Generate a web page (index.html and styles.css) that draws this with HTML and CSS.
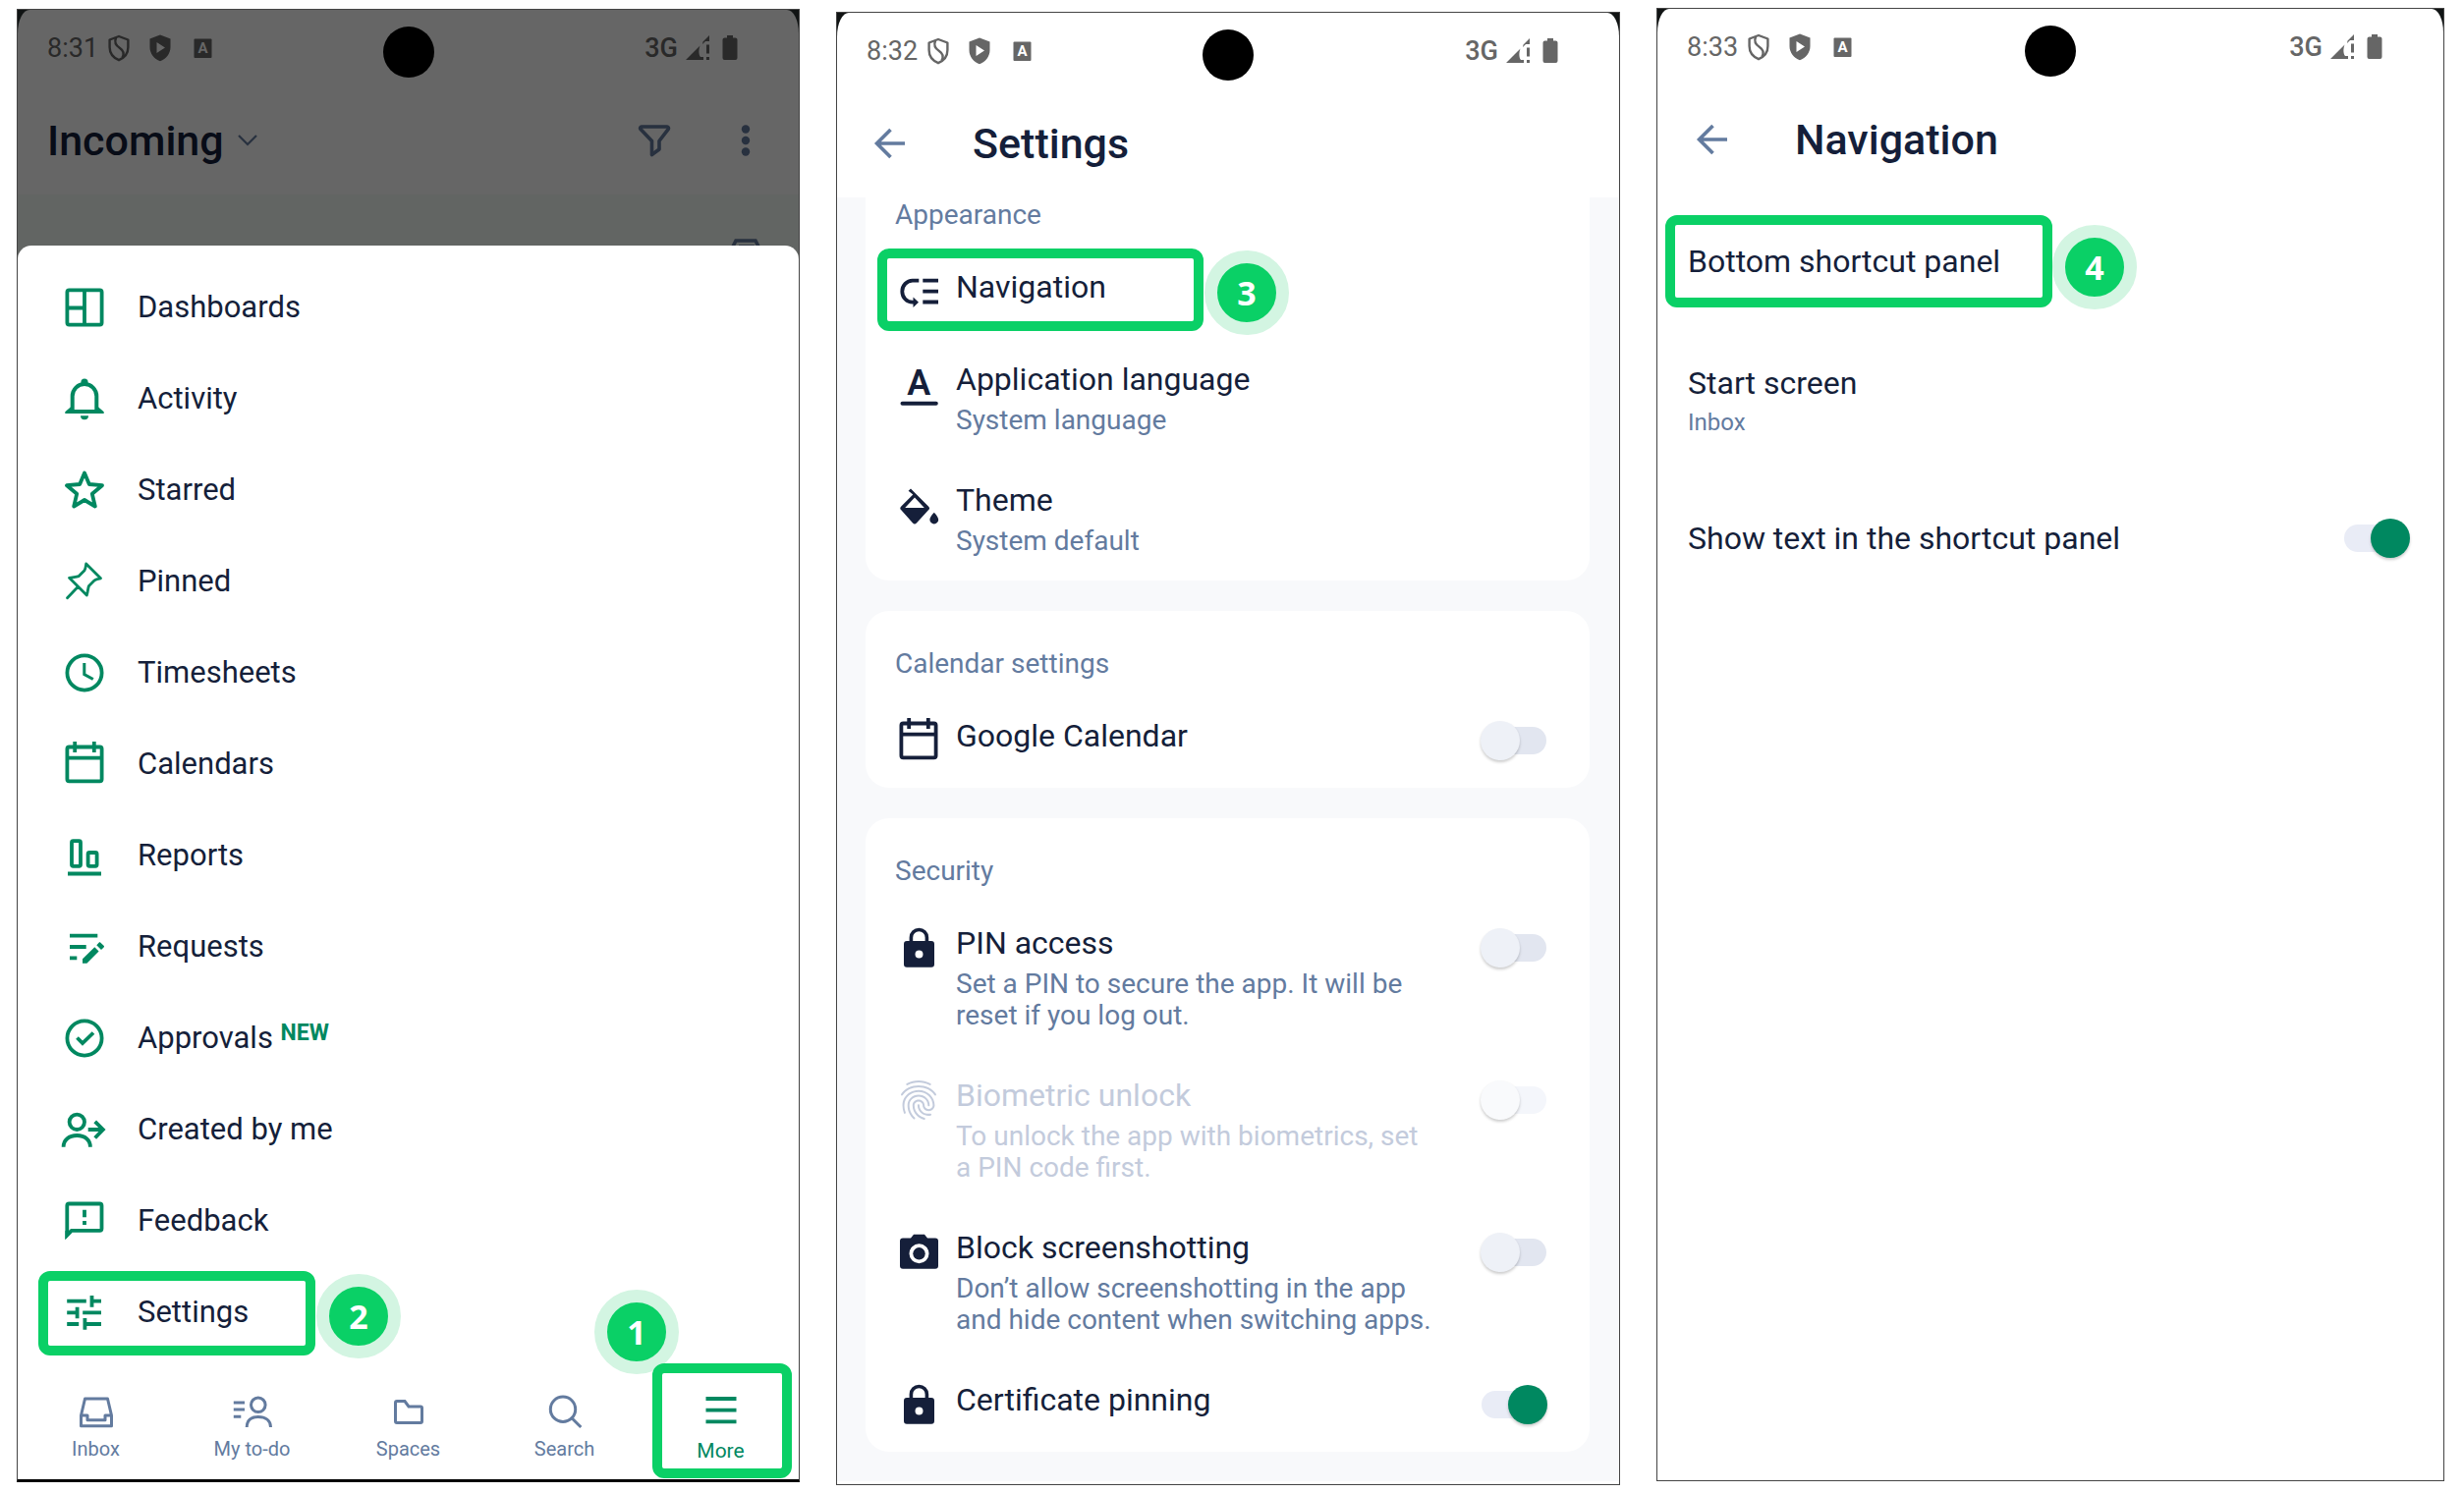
FILE: index.html
```html
<!DOCTYPE html>
<html lang="en">
<head>
<meta charset="utf-8">
<meta name="viewport" content="width=device-width, initial-scale=1">
<title>Bottom shortcut panel setup</title>
<link rel="stylesheet" href="styles.css">
</head>
<body>
<svg class="sprite" aria-hidden="true">
  <symbol id="i-shield-line" viewBox="0 0 22 28"><g fill="none" stroke="currentColor" stroke-width="2.4" stroke-linejoin="round"><path d="M11 2 20.400 5.500V13c0 6-3.800 10.800-9.400 13.200C5.400 23.800 1.600 19 1.600 13V5.500z"/><path d="M8 3.500c-2 5 0 8 4 10.500 4.500 3 4.500 6 2.500 9.500"/></g></symbol>
  <symbol id="i-shield-play" viewBox="0 0 22 28"><path fill="currentColor" fill-rule="evenodd" d="M11 .5 21.500 4.500V13c0 6.500-4.300 11.800-10.500 14.300C4.800 24.800.5 19.500.5 13V4.500zM7.500 8v11l8.500-5.500z"/></symbol>
  <symbol id="i-signal" viewBox="0 0 24 28"><path fill="currentColor" d="M0 26 14.500 11.500c-1.500 4-1.500 9 .5 11.500h3v3zM17.500 7.500 24 1v6h-4l-3 3zM21 10.500h3v9h-3zM21 23h3v3h-3z"/></symbol>
  <symbol id="i-battery" viewBox="0 0 16 28"><path fill="currentColor" d="M5 1h6v2.500h2.500a2 2 0 0 1 2 2V24a2 2 0 0 1-2 2h-11a2 2 0 0 1-2-2V5.500a2 2 0 0 1 2-2H5z"/></symbol>
  <symbol id="i-back" viewBox="0 0 48 48"><path fill="none" stroke="currentColor" stroke-width="3.600" d="M39 24H10.500M24.500 10 10.500 24l14 14"/></symbol>
  <symbol id="i-lock" viewBox="0 0 48 48"><path fill="none" stroke="currentColor" stroke-width="3.600" d="M16.400 19v-5.500a8 8 0 0 1 16 0V19"/><path fill="currentColor" fill-rule="evenodd" d="M12 17h25a3 3 0 0 1 3 3v20.700a3 3 0 0 1-3 3H12a3 3 0 0 1-3-3V20a3 3 0 0 1 3-3zm12.500 9.500a4 4 0 1 0 0 8 4 4 0 0 0 0-8z"/></symbol>
  <symbol id="i-calendar" viewBox="0 0 48 48"><g fill="none" stroke="currentColor" stroke-width="3.800"><rect x="6.400" y="6.500" width="35.200" height="34.800" rx="2"/><path d="M6 17.700h36M14.200 1v11M33.800 1v11"/></g></symbol>
</svg>
<main class="steps">

  <section class="screen screen-menu" aria-label="Incoming">
    <div class="face face-dimmed">
      <header class="top">
        <div class="status">
          <span class="time">8:31</span>
          <div class="status-icons">
            <svg class="s-22"><use href="#i-shield-line"/></svg>
            <svg class="s-22"><use href="#i-shield-play"/></svg>
            <svg class="s-22" viewBox="0 0 22 28"><rect x="3.500" y="4.500" width="18" height="19.500" rx="1" fill="currentColor"/><text class="cut" x="12.500" y="19" text-anchor="middle">A</text></svg>
          </div>
          <span class="net">3G</span>
          <svg class="s-24"><use href="#i-signal"/></svg>
          <svg class="s-16"><use href="#i-battery"/></svg>
        </div>
        <span class="punch"></span>
        <div class="bar bar-list">
          <button class="folder" type="button"><span class="title">Incoming</span>
            <svg class="s-24" viewBox="0 0 24 28"><path fill="none" stroke="currentColor" stroke-width="2.200" d="M3 9l9 9 9-9"/></svg></button>
          <button class="tool" type="button" aria-label="Filter"><svg class="icon" viewBox="0 0 48 48"><path fill="none" stroke="currentColor" stroke-width="3.600" stroke-linejoin="round" d="M11 10h26a1.500 1.500 0 0 1 1.300 2.300L29 24.500v8.500L21.500 38.500V24.500L9.800 12.300A1.500 1.500 0 0 1 11 10z"/></svg></button>
          <button class="tool" type="button" aria-label="More options"><svg class="icon" viewBox="0 0 48 48"><g fill="currentColor"><circle cx="24" cy="12.500" r="4.200"/><circle cx="24" cy="24" r="4.200"/><circle cx="24" cy="35.500" r="4.200"/></g></svg></button>
        </div>
      </header>
      <div class="strip"><svg class="icon" viewBox="0 0 48 48"><path fill="none" stroke="currentColor" stroke-width="3.600" d="M9 20l5-10h20l5 10v18H9zM17 16h14v10"/></svg></div>
    </div>
    <div class="sheet">
      <ul class="menu">
        <li><a href="#"><svg class="icon" viewBox="0 0 48 48"><g fill="none" stroke="currentColor" stroke-width="3.800"><rect x="6.400" y="6.400" width="35.200" height="35.200" rx="2"/><path d="M24 6v36M6 24.500h18"/></g></svg>Dashboards</a></li>
        <li><a href="#"><svg class="icon" viewBox="0 0 48 48"><path fill="none" stroke="currentColor" stroke-width="4" d="M11.700 37V21.300a12.300 12.300 0 0 1 24.600 0V37"/><path fill="currentColor" d="M4.300 39v-1.800l5.500-4.700 3 2.500h22.400l3-2.500 5.500 4.700V39zM20 41.200h8a4 4 0 0 1-8 0z"/><circle cx="24" cy="7" r="3.600" fill="currentColor"/></svg>Activity</a></li>
        <li><a href="#"><svg class="icon" viewBox="0 0 48 48"><path fill="none" stroke="currentColor" stroke-width="3.800" stroke-linejoin="round" d="M24 6.500l4.800 11.500 13.200 1.200-10.200 8.600 3 12.700L24 34l-10.800 6.500 3-12.700L6 19.200 19.200 18z"/></svg>Starred</a></li>
        <li><a href="#"><svg class="icon" viewBox="0 0 48 48"><path fill="none" stroke="currentColor" stroke-width="2.800" stroke-linejoin="round" stroke-linecap="round" d="M25.700 6 40.500 20.800c-2.500.3-5 .8-6.500 2.200l-5.500 5.500c-1 2-1 6-2.200 9.500L8.500 20.300c3-.8 7-.8 9.500-1.600l6-6c1.300-2 1.300-4.500 1.700-6.700zM17 29.700 6.500 40.700"/></svg>Pinned</a></li>
        <li><a href="#"><svg class="icon" viewBox="0 0 48 48"><g fill="none" stroke="currentColor"><circle cx="24" cy="24" r="17.600" stroke-width="3.800"/><path stroke-width="3" d="M23.800 14v11.500l9 5"/></g></svg>Timesheets</a></li>
        <li><a href="#"><svg class="icon"><use href="#i-calendar"/></svg>Calendars</a></li>
        <li><a href="#"><svg class="icon" viewBox="0 0 48 48"><g fill="none" stroke="currentColor" stroke-width="3.800"><rect x="11" y="9.200" width="9" height="25.600" rx="1.500"/><rect x="27.600" y="21" width="9" height="13.800" rx="1.500"/><path d="M7 42.500h34"/></g></svg>Reports</a></li>
        <li><a href="#"><svg class="icon" viewBox="0 0 48 48"><path fill="none" stroke="currentColor" stroke-width="3.800" d="M9 12.700h28.300M9 24h16.700M9 35.300h7.300"/><path fill="currentColor" d="M22 40.700v-4.500l12.300-12 4.300 4.200-12.200 12.300zM36.300 22.300l2.300-2.500c.6-.6 1.200-.6 1.800 0l3.200 3c.6.600.6 1.200 0 1.800l-2.600 2.500z"/></svg>Requests</a></li>
        <li><a href="#"><svg class="icon" viewBox="0 0 48 48"><g fill="none" stroke="currentColor" stroke-width="3.800"><circle cx="24" cy="24" r="17.600"/><path d="M16.500 23.500l5.500 5.500 11-10.500"/></g></svg><span>Approvals <sup>NEW</sup></span></a></li>
        <li><a href="#"><svg class="icon" viewBox="0 0 48 48"><g fill="none" stroke="currentColor" stroke-width="3.800"><circle cx="16.300" cy="16.300" r="7.700"/><path d="M2.600 41.700c0-7 5.500-11.700 13.700-11.700s13.600 4.700 13.600 11.700M27.700 24h15M34.700 15.800l8.200 8.200-8.200 8.500"/></g></svg>Created by me</a></li>
        <li><a href="#"><svg class="icon" viewBox="0 0 48 48"><path fill="none" stroke="currentColor" stroke-width="3.800" d="M6.300 38.500v-30a2 2 0 0 1 2-2h31.200a2 2 0 0 1 2 2v23.300a2 2 0 0 1-2 2H10.800z"/><path fill="currentColor" d="M4.400 34v8.700l7-7zM22.100 12.700h3.800v7.600h-3.800zM22.100 24h3.800v4h-3.800z"/></svg>Feedback</a></li>
        <li><a href="#"><svg class="icon" viewBox="0 0 48 48"><path fill="none" stroke="currentColor" stroke-width="3.800" d="M6.200 12.700h19.600M31.500 7v11.700M31.500 12.700H41M6.200 24.300h12M16.600 18.700v11.600M22.200 24.300H41M6.200 36h12M24.400 30v11.700M24.400 36H41"/></svg>Settings</a>
          <span class="mark mark-settings"></span><span class="badge badge-settings">2</span></li>
      </ul>
      <nav class="tabs">
        <a href="#"><svg class="icon" viewBox="0 0 48 48"><path fill="none" stroke="currentColor" stroke-width="3" stroke-linejoin="round" d="M12.500 11h23l4 17v10.700h-31V28zM8.500 28H15v4.700h18V28h6.500"/></svg>Inbox</a>
        <a href="#"><svg class="icon" viewBox="0 0 48 48"><g fill="none" stroke="currentColor" stroke-width="3"><circle cx="29.800" cy="17.300" r="7.300"/><path d="M18.200 40c0-7 4.300-10.500 11.600-10.500S42.500 33 42.500 40M4.800 15H16M4.800 22H16M4.800 29.300h7.500"/></g></svg>My to-do</a>
        <a href="#"><svg class="icon" viewBox="0 0 48 48"><path fill="none" stroke="currentColor" stroke-width="3" d="M12 13.500h8l4 5.500h12a1.500 1.500 0 0 1 1.500 1.500V34a1.500 1.500 0 0 1-1.500 1.500H12a1.500 1.500 0 0 1-1.500-1.500V15a1.500 1.500 0 0 1 1.500-1.500z"/></svg>Spaces</a>
        <a href="#"><svg class="icon" viewBox="0 0 48 48"><g fill="none" stroke="currentColor" stroke-width="3"><circle cx="22" cy="21.700" r="12.700"/><path d="M31 30.700l9.300 9.300"/></g></svg>Search</a>
        <a href="#" class="active" aria-current="page"><span class="badge badge-more">1</span><span class="mark mark-more"></span><svg class="icon" viewBox="0 0 48 48"><path fill="none" stroke="currentColor" stroke-width="3.800" d="M8.500 11h31M8.500 22.700h31M8.500 34.300h31"/></svg>More</a>
      </nav>
    </div>
  </section>

  <section class="screen screen-settings" aria-label="Settings">
    <div class="face">
      <header class="top">
        <div class="status">
          <span class="time">8:32</span>
          <div class="status-icons">
            <svg class="s-22"><use href="#i-shield-line"/></svg>
            <svg class="s-22"><use href="#i-shield-play"/></svg>
            <svg class="s-22" viewBox="0 0 22 28"><rect x="3.500" y="4.500" width="18" height="19.500" rx="1" fill="currentColor"/><text class="cut" x="12.500" y="19" text-anchor="middle">A</text></svg>
          </div>
          <span class="net">3G</span>
          <svg class="s-24"><use href="#i-signal"/></svg>
          <svg class="s-16"><use href="#i-battery"/></svg>
        </div>
        <span class="punch"></span>
        <div class="bar">
          <button class="tool" type="button" aria-label="Back"><svg class="icon"><use href="#i-back"/></svg></button>
          <h1 class="title">Settings</h1>
        </div>
      </header>
      <div class="cards">
        <section class="card card-scrolled">
          <h2>Appearance</h2>
          <ul>
            <li><svg class="icon" viewBox="0 0 48 48"><path fill="none" stroke="currentColor" stroke-width="3.800" d="M24.300 12.700h-6.500a10.500 11 0 0 0 0 22H20M28.300 12.700H44M28.300 23.700H44M28.300 34.500H44"/><path fill="currentColor" d="M18.500 29.500l5.500 5.200-5.500 5.200z"/></svg>
              <div class="text"><a href="#">Navigation</a></div>
              <span class="mark mark-navigation"></span><span class="badge badge-navigation">3</span></li>
            <li><svg class="icon" viewBox="0 0 48 48"><text class="letter" x="24.300" y="35" text-anchor="middle">A</text><path stroke="currentColor" stroke-width="4" stroke-linecap="round" d="M7.500 43.700h34.300"/></svg>
              <div class="text"><a href="#">Application language</a><p>System language</p></div></li>
            <li><svg class="icon" viewBox="0 0 48 48"><g fill="currentColor"><path fill-rule="evenodd" d="M13.600 9.800 16 7.500 34 25.500a2.600 2.600 0 0 1 0 3.800L21.900 42.400a2.600 2.600 0 0 1-3.800 0L6.300 29.300a2.600 2.600 0 0 1 0-3.800l12-12zM20 16.500 10.200 27h19.600z"/><path d="M39.800 31.700s4.400 4.300 4.400 7.300a4.400 4.400 0 0 1-8.800 0c0-3 4.400-7.300 4.400-7.300z"/></g></svg>
              <div class="text"><a href="#">Theme</a><p>System default</p></div></li>
          </ul>
        </section>
        <section class="card">
          <h2>Calendar settings</h2>
          <ul>
            <li><svg class="icon"><use href="#i-calendar"/></svg>
              <div class="text"><label for="gcal">Google Calendar</label></div><input class="switch" type="checkbox" id="gcal"></li>
          </ul>
        </section>
        <section class="card">
          <h2>Security</h2>
          <ul>
            <li><svg class="icon"><use href="#i-lock"/></svg>
              <div class="text"><label for="pin">PIN access</label><p>Set a PIN to secure the app. It will be reset if you log out.</p></div><input class="switch" type="checkbox" id="pin"></li>
            <li class="off"><svg class="icon" viewBox="0 0 24 24"><path fill="currentColor" d="M17.810 4.470c-.08 0-.16-.02-.23-.06C15.660 3.420 14 3 12.010 3c-1.980 0-3.860.47-5.570 1.410-.24.13-.54.04-.68-.2-.13-.24-.04-.55.2-.68C7.820 2.520 9.860 2 12.010 2c2.130 0 3.990.47 6.030 1.520.25.13.34.43.21.67-.09.18-.26.28-.44.28zM3.500 9.720c-.1 0-.2-.03-.29-.09-.23-.16-.28-.47-.12-.7.99-1.400 2.250-2.500 3.750-3.270C9.980 4.040 14 4.030 17.150 5.650c1.500.77 2.760 1.860 3.750 3.250.16.22.11.54-.12.7-.23.16-.54.11-.7-.12-.9-1.260-2.040-2.250-3.390-2.940-2.870-1.470-6.540-1.470-9.400.01-1.360.7-2.500 1.700-3.400 2.960-.08.14-.23.21-.39.21zm6.250 12.070c-.13 0-.26-.05-.35-.15-.87-.87-1.340-1.430-2.010-2.640-.69-1.230-1.050-2.730-1.050-4.340 0-2.970 2.540-5.390 5.660-5.390s5.660 2.420 5.660 5.390c0 .28-.22.5-.5.5s-.5-.22-.5-.5c0-2.420-2.090-4.390-4.660-4.390-2.570 0-4.660 1.970-4.660 4.390 0 1.440.32 2.770.93 3.850.64 1.150 1.080 1.640 1.850 2.420.19.2.19.51 0 .71-.11.1-.24.15-.37.15zm7.170-1.850c-1.190 0-2.240-.3-3.100-.89-1.490-1.010-2.380-2.650-2.380-4.390 0-.28.22-.5.5-.5s.5.22.5.5c0 1.410.72 2.740 1.940 3.560.71.48 1.540.71 2.540.71.24 0 .64-.03 1.040-.1.27-.05.53.13.58.41.05.27-.13.53-.41.58-.57.11-1.070.12-1.210.12zM14.910 22c-.04 0-.09-.01-.13-.02-1.590-.44-2.630-1.030-3.720-2.100-1.400-1.390-2.170-3.240-2.170-5.220 0-1.620 1.380-2.940 3.080-2.940 1.700 0 3.080 1.320 3.080 2.940 0 1.070.93 1.940 2.080 1.940s2.080-.87 2.080-1.940c0-3.770-3.250-6.830-7.250-6.830-2.840 0-5.440 1.580-6.610 4.030-.39.81-.59 1.760-.59 2.800 0 .78.07 2.010.67 3.610.1.26-.03.55-.29.64-.26.1-.55-.04-.64-.29-.49-1.310-.73-2.610-.73-3.960 0-1.200.23-2.290.68-3.240 1.330-2.790 4.280-4.600 7.510-4.600 4.550 0 8.250 3.510 8.250 7.830 0 1.620-1.380 2.940-3.080 2.940s-3.080-1.320-3.080-2.940c0-1.070-.93-1.940-2.080-1.940s-2.080.87-2.080 1.940c0 1.710.66 3.310 1.870 4.510.95.94 1.860 1.460 3.270 1.850.27.07.42.35.35.61-.05.23-.26.38-.47.38z"/></svg>
              <div class="text"><label for="bio">Biometric unlock</label><p>To unlock the app with biometrics, set a PIN code first.</p></div><input class="switch" type="checkbox" id="bio" disabled></li>
            <li><svg class="icon" viewBox="0 0 48 48"><path fill="currentColor" fill-rule="evenodd" d="M19 5.700h11l3 3.800h8a3 3 0 0 1 3 3v25.200a3 3 0 0 1-3 3H8a3 3 0 0 1-3-3V12.500a3 3 0 0 1 3-3h8zM24.500 15.300a10 10 0 1 0 0 20 10 10 0 0 0 0-20z"/><circle cx="24.500" cy="25.300" r="6.200" fill="currentColor"/></svg>
              <div class="text"><label for="shots">Block screenshotting</label><p>Don’t allow screenshotting in the app and hide content when switching apps.</p></div><input class="switch" type="checkbox" id="shots"></li>
            <li><svg class="icon"><use href="#i-lock"/></svg>
              <div class="text"><label for="cert">Certificate pinning</label></div><input class="switch" type="checkbox" id="cert" checked></li>
          </ul>
        </section>
      </div>
    </div>
  </section>

  <section class="screen screen-navigation" aria-label="Navigation">
    <div class="face">
      <header class="top">
        <div class="status">
          <span class="time">8:33</span>
          <div class="status-icons">
            <svg class="s-22"><use href="#i-shield-line"/></svg>
            <svg class="s-22"><use href="#i-shield-play"/></svg>
            <svg class="s-22" viewBox="0 0 22 28"><rect x="3.500" y="4.500" width="18" height="19.500" rx="1" fill="currentColor"/><text class="cut" x="12.500" y="19" text-anchor="middle">A</text></svg>
          </div>
          <span class="net">3G</span>
          <svg class="s-24"><use href="#i-signal"/></svg>
          <svg class="s-16"><use href="#i-battery"/></svg>
        </div>
        <span class="punch"></span>
        <div class="bar">
          <button class="tool" type="button" aria-label="Back"><svg class="icon"><use href="#i-back"/></svg></button>
          <h1 class="title">Navigation</h1>
        </div>
      </header>
      <ul class="options">
        <li><a href="#">Bottom shortcut panel</a>
          <span class="mark mark-panel"></span><span class="badge badge-panel">4</span></li>
        <li><div><a href="#">Start screen</a><p>Inbox</p></div></li>
        <li><label for="showtext">Show text in the shortcut panel</label><input class="switch" type="checkbox" id="showtext" checked></li>
      </ul>
    </div>
  </section>

</main>
</body>
</html>
```
FILE: styles.css
```css
:root {
  --navy: #151f3a;
  --slate: #637b9f;
  --green: #008860;
  --accent: #0ad066;
  --muted: #c3cbdc;
}

* { box-sizing: border-box; }

body {
  margin: 0;
  background: #fff;
  color: var(--navy);
  font: 400 32px/40px Roboto, "Liberation Sans", sans-serif;
}

h1, h2, p, ul { margin: 0; padding: 0; font-weight: 400; }
ul { list-style: none; }
a { color: inherit; text-decoration: none; }
button { padding: 0; border: 0; background: none; color: inherit; font: inherit; }
svg { display: block; flex: none; }

.sprite { position: absolute; width: 0; height: 0; }
.icon { width: 48px; height: 48px; }
.s-24 { width: 24px; height: 28px; }
.s-22 { width: 22px; height: 28px; }
.s-16 { width: 16px; height: 28px; }

.steps {
  display: grid;
  grid-template-columns: 797fr 798fr 802fr;
  gap: 37px;
  padding: 8px 20px 6px 17px;
}

/* Phone screens */
.screen {
  display: flex;
  flex-direction: column;
  margin-bottom: 4px;
  border: 1px solid #444;
  background: #111414;
}
.screen-menu { margin: 1px 0 3px; border-bottom: 3px solid #000; }
.screen-settings { margin: 4px 0 0; }

.face {
  flex: 1;
  border-radius: 12px 12px 0 0 / 24px 24px 0 0;
  background: #fff;
  overflow: hidden;
}
.face-dimmed { flex: none; background: #666; }

.top { position: relative; }
.status {
  display: flex;
  align-items: center;
  height: 78px;
  padding: 0 62px 0 30px;
  color: #666;
  font-size: 27px;
}
.status-icons { display: flex; gap: 20px; margin: 0 auto 0 10px; }
.net { margin-right: 8px; font-weight: 500; }
.status .s-16 { margin-left: 13px; }
.cut { fill: #fff; font: 700 15px Roboto, sans-serif; }
.letter { fill: currentColor; font: 600 36px Roboto, sans-serif; }
.face-dimmed .status { color: #292929; }
.face-dimmed .cut { fill: #666; }

.punch {
  position: absolute;
  top: 17px;
  left: calc(50% - 26px);
  width: 52px;
  height: 52px;
  border-radius: 50%;
  background: #000;
}

.bar {
  display: flex;
  align-items: center;
  gap: 60px;
  height: 110px;
  padding: 0 30px;
}
.screen-navigation .bar { padding: 0 32px; }
.title { font-size: 43px; font-weight: 500; line-height: 48px; }
.tool { color: var(--slate); }
.bar-list { gap: 45px; color: #080c17; }
.bar-list .tool { color: #28313f; }
.folder { display: flex; align-items: center; gap: 12px; margin-right: auto; }
.folder svg { color: #28313f; }

.strip {
  display: flex;
  justify-content: flex-end;
  height: 68px;
  padding: 37px 30px 0 0;
  background: #626563;
  color: #28313f;
}

/* Menu sheet */
.sheet {
  flex: 1;
  margin-top: -16px;
  padding-top: 16px;
  border-radius: 14px 14px 0 0;
  background: #fff;
}
.menu li { position: relative; }
.menu a {
  display: flex;
  align-items: center;
  gap: 30px;
  height: 93px;
  padding-left: 44px;
  font-size: 31px;
}
.menu svg { color: var(--green); }
.menu sup {
  color: var(--green);
  font-size: 23px;
  font-weight: 700;
  line-height: 0;
  vertical-align: 8px;
}

.tabs { display: grid; grid-template-columns: repeat(5, 1fr); }
.tabs a {
  position: relative;
  display: flex;
  flex-direction: column;
  align-items: center;
  gap: 2px;
  height: 124px;
  padding-top: 31px;
  color: var(--slate);
  font-size: 20px;
  line-height: 24px;
}
.tabs .active { color: var(--green); font-size: 21px; line-height: 28px; }

/* Settings cards */
.cards {
  display: flex;
  flex-direction: column;
  gap: 31px;
  padding: 0 30px 30px 29px;
  background: #f8f9fb;
}
.card { border-radius: 24px; background: #fff; }
.card-scrolled { border-radius: 0 0 24px 24px; }
.card h2 {
  padding: 38px 30px 16px;
  color: var(--slate);
  font-size: 28px;
  line-height: 32px;
}
.card-scrolled h2 { padding-top: 2px; }
.card li {
  position: relative;
  display: flex;
  align-items: flex-start;
  min-height: 94px;
  padding: 21px 44px 24px 30px;
}
.card .icon { margin: 1px 14px 0 0; }
.text { flex: 1; }
.text p {
  margin-top: 6px;
  padding-right: 12px;
  color: var(--slate);
  font-size: 28px;
  line-height: 32px;
}
.card .switch { margin: 11px 0 0 35px; }
.card .off, .off p { color: var(--muted); }

/* Navigation options */
.options { padding-top: 7px; }
.options li {
  position: relative;
  display: flex;
  align-items: center;
  justify-content: space-between;
  padding: 42px 35px 42px 31px;
}
.options p {
  margin-top: 6px;
  color: var(--slate);
  font-size: 24px;
  line-height: 28px;
}

.switch {
  appearance: none;
  display: flex;
  flex: none;
  align-items: center;
  width: 66px;
  height: 28px;
  margin: 0;
  border-radius: 14px;
  background: #e2e6f0;
}
.switch::before {
  content: "";
  flex: none;
  width: 40px;
  height: 40px;
  margin-left: -1px;
  border-radius: 50%;
  background: #eef1f7;
  box-shadow: 0 2px 3px rgba(0, 0, 0, .2);
}
.switch:checked { justify-content: flex-end; background: #e9ecf6; }
.switch:checked::before { margin: 0 -1px 0 0; background: var(--green); }
.switch:disabled { background: #f4f6fb; }
.switch:disabled::before { background: #f9fafc; }

/* Step annotations drawn over the screens */
.mark {
  position: absolute;
  border: 10px solid var(--accent);
  border-radius: 12px;
  pointer-events: none;
}
.mark-settings { top: 5px; left: 21px; width: 282px; height: 86px; }
.mark-more { top: 6px; right: 7px; width: 142px; height: 117px; }
.mark-navigation { top: 2px; left: 12px; width: 332px; height: 84px; }
.mark-panel { top: 15px; left: 8px; width: 394px; height: 94px; }

.badge {
  position: absolute;
  display: grid;
  place-items: center;
  width: 86px;
  height: 86px;
  border: 13px solid #d3f5e2;
  border-radius: 50%;
  background: var(--accent);
  color: #fff;
  font: 700 34px/40px "Open Sans", "Noto Sans", sans-serif;
}
.badge-settings { top: 8px; left: 304px; }
.badge-more { top: -69px; left: -49px; }
.badge-navigation { top: 4px; left: 345px; }
.badge-panel { top: 25px; left: 402px; }
```
